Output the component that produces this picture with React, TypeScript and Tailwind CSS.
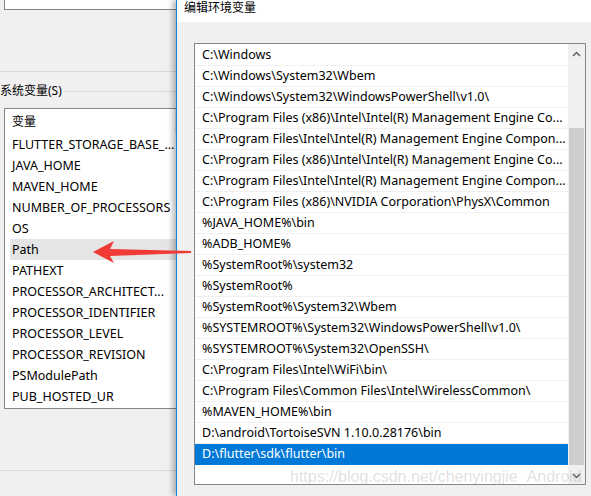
import React from "react";

const font = { fontFamily: '"Noto Sans", "Noto Sans CJK SC", sans-serif' };

const sysVars = [
  "FLUTTER_STORAGE_BASE_...",
  "JAVA_HOME",
  "MAVEN_HOME",
  "NUMBER_OF_PROCESSORS",
  "OS",
  "Path",
  "PATHEXT",
  "PROCESSOR_ARCHITECT...",
  "PROCESSOR_IDENTIFIER",
  "PROCESSOR_LEVEL",
  "PROCESSOR_REVISION",
  "PSModulePath",
  "PUB_HOSTED_UR",
];

const paths = [
  "C:\\Windows",
  "C:\\Windows\\System32\\Wbem",
  "C:\\Windows\\System32\\WindowsPowerShell\\v1.0\\",
  "C:\\Program Files (x86)\\Intel\\Intel(R) Management Engine Co...",
  "C:\\Program Files\\Intel\\Intel(R) Management Engine Compon...",
  "C:\\Program Files (x86)\\Intel\\Intel(R) Management Engine Co...",
  "C:\\Program Files\\Intel\\Intel(R) Management Engine Compon...",
  "C:\\Program Files (x86)\\NVIDIA Corporation\\PhysX\\Common",
  "%JAVA_HOME%\\bin",
  "%ADB_HOME%",
  "%SystemRoot%\\system32",
  "%SystemRoot%",
  "%SystemRoot%\\System32\\Wbem",
  "%SYSTEMROOT%\\System32\\WindowsPowerShell\\v1.0\\",
  "%SYSTEMROOT%\\System32\\OpenSSH\\",
  "C:\\Program Files\\Intel\\WiFi\\bin\\",
  "C:\\Program Files\\Common Files\\Intel\\WirelessCommon\\",
  "%MAVEN_HOME%\\bin",
  "D:\\android\\TortoiseSVN 1.10.0.28176\\bin",
  "D:\\flutter\\sdk\\flutter\\bin",
];

function Chevron({ down }: { down?: boolean }) {
  return (
    <svg width="9" height="6" viewBox="0 0 9 6" className={down ? "rotate-180" : ""}>
      <path d="M1 5 L4.5 1.5 L8 5" fill="none" stroke="#606060" strokeWidth="1.5" />
    </svg>
  );
}

export default function App() {
  return (
    <div className="relative flex h-[496px] w-[591px] overflow-hidden bg-[#f0f0f0] text-[12.5px] text-black" style={font}>
      {/* left: system properties window behind */}
      <div className="flex w-[176px] shrink-0 flex-col">
        <div className="ml-[4px] h-[10px] border-b border-l border-[#828790] bg-white" />
        <div className="mt-[61px] h-px bg-[#dadada]" />
        <div className="mt-[12px] flex items-center">
          <span className="whitespace-nowrap text-[12px] leading-[14px]">系统变量(S)</span>
          <div className="ml-[2px] h-px flex-1 bg-[#dadada]" />
        </div>
        <div className="ml-[4px] mt-[10px] h-[301px] border border-r-0 border-[#828790] bg-white pl-[5px]">
          <div className="flex h-[25px] items-center">
            <span className="pl-[2px] text-[12px] leading-none">变量</span>
            <div className="ml-auto h-full w-px bg-[#e5e5e5]" />
          </div>
          {sysVars.map((v) => (
            <div
              key={v}
              className={`flex h-[21px] items-center whitespace-nowrap pl-[2px] pt-px ${v === "Path" ? "bg-[#e5e5e5]" : ""}`}
            >
              {v}
            </div>
          ))}
        </div>
        <div className="mt-[61px] h-px bg-[#dadada]" />
      </div>

      {/* right: edit environment variable dialog */}
      <div className="flex flex-1 flex-col border-l border-[#1883d7] shadow-[-3px_0_6px_rgba(0,0,0,0.3)]">
        <div className="h-[22px] bg-white pl-[7px] text-[12px] leading-[16px]">编辑环境变量</div>
        <div className="ml-[17px] mt-[21px] flex h-[442px] w-[392px] border border-[#828790] bg-white">
          <div className="flex-1 pt-px">
            {paths.map((p, i) => (
              <div
                key={i}
                className={`flex h-[21px] items-center overflow-hidden whitespace-nowrap border-b pl-[7px] pt-px ${
                  i === paths.length - 1 ? "border-[#0078d7] bg-[#0078d7] text-white" : "border-[#f0f0f0]"
                }`}
              >
                {p}
              </div>
            ))}
          </div>
          <div className="flex w-[17px] flex-col bg-[#f0f0f0]">
            <div className="flex h-[17px] items-center justify-center pt-[2px]">
              <Chevron />
            </div>
            <div className="ml-px mt-[67px] h-[337px] w-[15px] bg-[#cdcdcd]" />
            <div className="mt-auto flex h-[17px] items-center justify-center">
              <Chevron down />
            </div>
          </div>
        </div>
      </div>

      {/* red arrow annotation */}
      <svg className="absolute left-0 top-0" width="591" height="496" viewBox="0 0 591 496">
        <path d="M93 252 L114 241 L110 249 L191 251 L191 253 L110 256 L114 263 Z" fill="#f03a36" />
      </svg>

      {/* watermark */}
      <div
        className="absolute left-[290px] top-[467px] whitespace-nowrap text-[16px] leading-[20px] text-[rgba(150,150,150,0.3)]"
        style={{ fontFamily: '"Liberation Sans", Arial, sans-serif' }}
      >
        https://blog.csdn.net/chenyingjie_Android
      </div>
    </div>
  );
}
